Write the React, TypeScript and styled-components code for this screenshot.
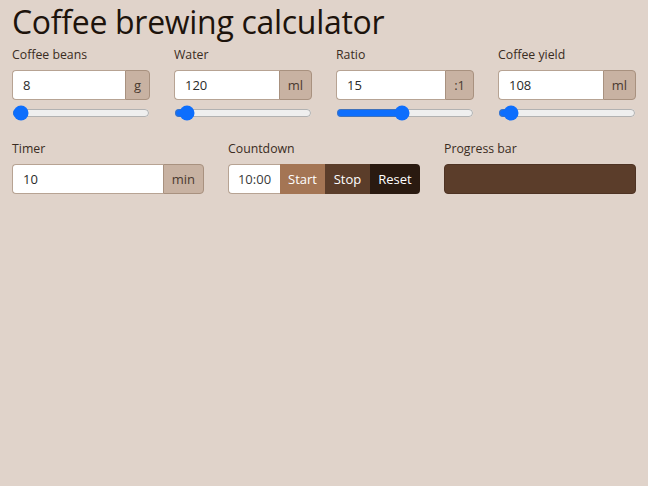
import React, { useState } from "react";
import styled, { createGlobalStyle } from "styled-components";

const Global = createGlobalStyle`
  html, body { margin: 0; padding: 0; background: #e0d3ca; }
  body { font-family: "Open Sans", "Noto Sans", sans-serif; color: #22160f; }
  * { box-sizing: border-box; }
`;

const Page = styled.div`
  padding: 0 12px;
`;

const Title = styled.h1`
  margin: 0;
  font-size: 32px;
  font-weight: 400;
  line-height: 44px;
  letter-spacing: -0.3px;
  color: #1d130c;
`;

const Grid = styled.div<{ $cols: number }>`
  display: grid;
  grid-template-columns: repeat(${(p) => p.$cols}, minmax(0, 1fr));
  column-gap: 24px;
  margin-top: ${(p) => (p.$cols === 4 ? "1px" : "18px")};
`;

const Field = styled.div`
  display: flex;
  flex-direction: column;
  min-width: 0;
`;

const Label = styled.label`
  font-size: 12.3px;
  line-height: 20px;
  color: #3a2c22;
  margin-bottom: 5px;
`;

const Group = styled.div`
  display: flex;
  height: 30px;
`;

const Input = styled.input`
  flex: 1;
  min-width: 0;
  width: 0;
  height: 30px;
  border: 1px solid #b7a393;
  border-right: none;
  border-radius: 4px 0 0 4px;
  background: #fff;
  padding: 0 10px;
  font: inherit;
  font-size: 13px;
  color: #2a2a2a;
  outline: none;
`;

const Addon = styled.span`
  display: flex;
  align-items: center;
  padding: 0 8px;
  background: #c8b2a2;
  border: 1px solid #a8917f;
  border-radius: 0 4px 4px 0;
  font-size: 13px;
  color: #4a3a30;
`;

const Range = styled.input`
  width: 100%;
  margin: 5px 0 0;
  height: 16px;
  accent-color: #0d6efd;
`;

const TimeBox = styled.div`
  width: 52px;
  display: flex;
  align-items: center;
  justify-content: center;
  background: #fff;
  border: 1px solid #b7a393;
  border-right: none;
  border-radius: 4px 0 0 4px;
  font-size: 13px;
  color: #3a3a3a;
`;

const Btn = styled.button<{ $bg: string; $w: number; $last?: boolean }>`
  width: ${(p) => p.$w}px;
  height: 30px;
  border: none;
  background: ${(p) => p.$bg};
  color: #fff;
  font: inherit;
  font-size: 13px;
  font-weight: 500;
  padding: 0;
  border-radius: ${(p) => (p.$last ? "0 4px 4px 0" : "0")};
  cursor: pointer;
`;

const Progress = styled.div`
  height: 30px;
  border-radius: 4px;
  background: #5b3d2a;
  border: 1px solid #4e3323;
`;

type NumField = { label: string; unit: string; value: number; min: number; max: number };

const fields: NumField[] = [
  { label: "Coffee beans", unit: "g", value: 8, min: 6, max: 200 },
  { label: "Water", unit: "ml", value: 120, min: 80, max: 1100 },
  { label: "Ratio", unit: ":1", value: 15, min: 10, max: 20.5 },
  { label: "Coffee yield", unit: "ml", value: 108, min: 70, max: 1000 },
];

export default function App() {
  const [vals, setVals] = useState(fields.map((f) => f.value));
  const [timer, setTimer] = useState(10);
  return (
    <Page>
      <Global />
      <Title>Coffee brewing calculator</Title>
      <Grid $cols={4}>
        {fields.map((f, i) => (
          <Field key={f.label}>
            <Label>{f.label}</Label>
            <Group>
              <Input
                type="text"
                value={vals[i]}
                onChange={(e) => {
                  const n = [...vals];
                  n[i] = Number(e.target.value) || 0;
                  setVals(n);
                }}
              />
              <Addon>{f.unit}</Addon>
            </Group>
            <Range
              type="range"
              min={f.min}
              max={f.max}
              step="any"
              value={vals[i]}
              onChange={(e) => {
                const n = [...vals];
                n[i] = Number(e.target.value);
                setVals(n);
              }}
            />
          </Field>
        ))}
      </Grid>
      <Grid $cols={3}>
        <Field>
          <Label>Timer</Label>
          <Group>
            <Input type="text" value={timer} onChange={(e) => setTimer(Number(e.target.value) || 0)} />
            <Addon>min</Addon>
          </Group>
        </Field>
        <Field>
          <Label>Countdown</Label>
          <Group>
            <TimeBox>10:00</TimeBox>
            <Btn $bg="#a47554" $w={45}>Start</Btn>
            <Btn $bg="#5b3d2a" $w={45}>Stop</Btn>
            <Btn $bg="#2a1a10" $w={50} $last>Reset</Btn>
          </Group>
        </Field>
        <Field>
          <Label>Progress bar</Label>
          <Progress />
        </Field>
      </Grid>
    </Page>
  );
}
